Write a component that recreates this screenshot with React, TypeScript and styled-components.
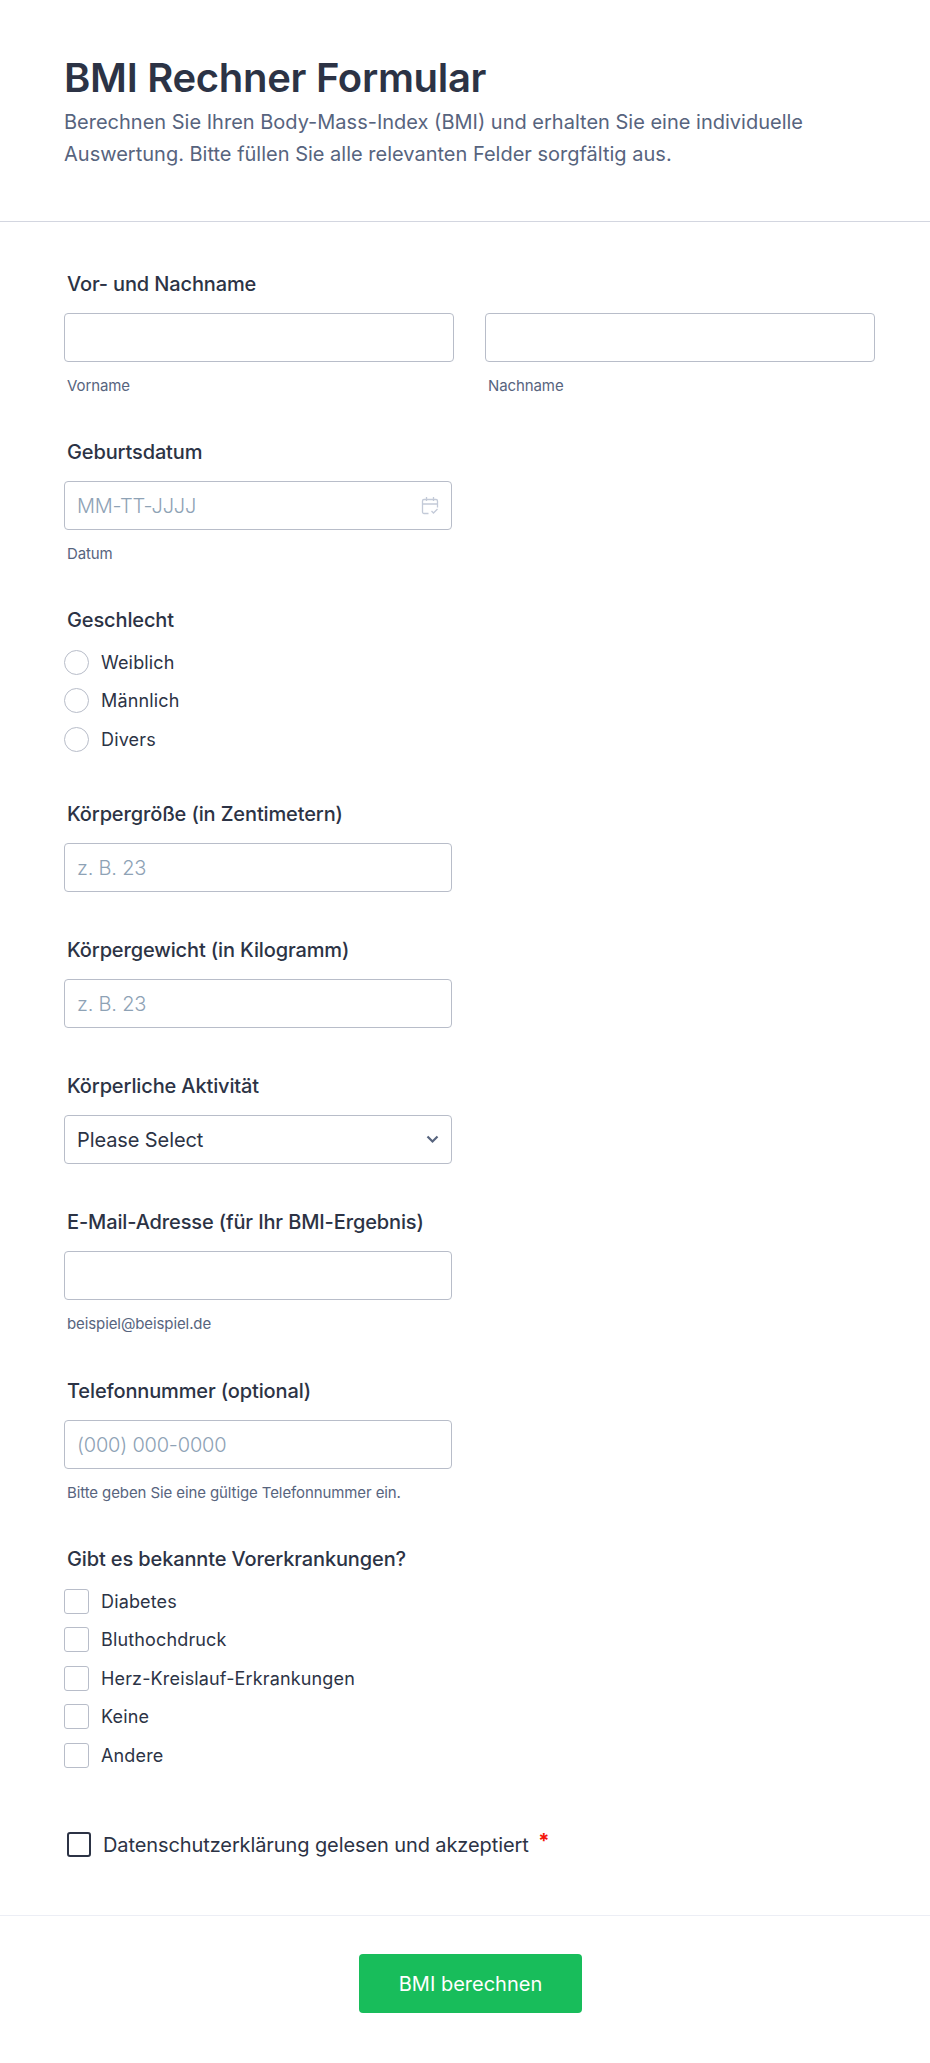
import styled, { createGlobalStyle } from 'styled-components'

const GlobalStyle = createGlobalStyle`
  * {
    box-sizing: border-box;
  }
  body {
    margin: 0;
    background: #fff;
    font-family: Inter, "Liberation Sans", sans-serif;
  }
`

const Page = styled.div`
  width: 930px;
  height: 2063px;
  background: #fff;
  color: #2c3345;
`

const Header = styled.header`
  height: 222px;
  padding: 49px 64px 0;
  border-bottom: 1px solid #d3d6e0;
`

const Title = styled.h1`
  margin: 0;
  font-size: 40px;
  line-height: 57px;
  font-weight: 600;
  letter-spacing: -0.3px;
  color: #2c3345;
`

const Description = styled.p`
  margin: 0;
  font-size: 20px;
  line-height: 32px;
  color: #57647e;
`

const Form = styled.main`
  padding: 48px 64px 0;
  height: 1694px;
  border-bottom: 1px solid #eceef5;
`

const Field = styled.section<{ $gap?: number }>`
  margin-bottom: ${({ $gap }) => $gap ?? 44}px;
`

const Label = styled.div`
  margin: 0 0 15px 3px;
  font-size: 20px;
  line-height: 28px;
  font-weight: 500;
  letter-spacing: -0.13px;
  color: #2c3345;
`

const NameRow = styled.div`
  display: grid;
  grid-template-columns: 390px 390px;
  gap: 31px;
`

const InputBox = styled.div`
  display: flex;
  align-items: center;
  justify-content: space-between;
  width: 388px;
  height: 49px;
  padding: 0 12px;
  background: #fff;
  border: 1px solid #b8bdc9;
  border-radius: 4px;
  font-size: 20px;
`

const WideInputBox = styled(InputBox)`
  width: 390px;
`

const Placeholder = styled.span`
  color: #8ea2b5;
  font-weight: 300;
  letter-spacing: -0.2px;
`

const SelectValue = styled.span`
  padding-top: 1px;
  color: #2c3345;
  letter-spacing: -0.1px;
`

const Hint = styled.div`
  margin: 14px 0 -2px 3px;
  font-size: 15px;
  line-height: 20px;
  letter-spacing: -0.1px;
  color: #57647e;
`

const OptionList = styled.div`
  display: flex;
  flex-direction: column;
  gap: 14.5px;
  margin-top: 16px;
`

const Option = styled.div`
  display: flex;
  align-items: center;
  gap: 12px;
  height: 24px;
  font-size: 18px;
  letter-spacing: 0.15px;
  color: #2c3345;
`

const Radio = styled.span`
  width: 25px;
  height: 25px;
  border: 1px solid #b8bdc9;
  border-radius: 50%;
`

const CheckBox = styled.span`
  width: 25px;
  height: 25px;
  border: 1px solid #b8bdc9;
  border-radius: 3px;
`

const TermsRow = styled.div`
  display: flex;
  align-items: center;
  gap: 12px;
  margin: 0 0 0 3px;
  font-size: 20px;
  letter-spacing: -0.1px;
  color: #2c3345;
`

const TermsBox = styled.span`
  width: 24px;
  height: 25px;
  border: 2px solid #2c3345;
  border-radius: 3px;
`

const Required = styled.span`
  position: relative;
  top: -4px;
  margin-left: 4px;
  color: #f5170a;
  font-weight: 700;
`

const Footer = styled.footer`
  display: flex;
  justify-content: center;
  padding: 38px 0 0 11px;
`

const SubmitButton = styled.button`
  width: 223px;
  height: 59px;
  border: 0;
  border-radius: 4px;
  background: #18bd5b;
  color: #fff;
  font-family: inherit;
  font-size: 20px;
  font-weight: 400;
`

const CalendarIcon = () => (
  <svg width="18" height="19" viewBox="0 0 18 19" fill="none" stroke="#c3cad8" strokeWidth="1.3">
    <path d="M7.5 17.5H3A1.5 1.5 0 0 1 1.5 16V5A1.5 1.5 0 0 1 3 3.5h12A1.5 1.5 0 0 1 16.5 5v6.5" />
    <path d="M1.5 8h15M5.5 1v4M12.5 1v4" />
    <path d="M10.5 15l2 2 4-4" />
  </svg>
)

const ChevronIcon = () => (
  <svg width="13" height="9" viewBox="0 0 13 9" fill="none" stroke="#57647e" strokeWidth="2.2">
    <path d="M1.5 1.5l5 5 5-5" />
  </svg>
)

const genders = ['Weiblich', 'Männlich', 'Divers']
const conditions = ['Diabetes', 'Bluthochdruck', 'Herz-Kreislauf-Erkrankungen', 'Keine', 'Andere']

const App = () => (
  <Page>
    <GlobalStyle />
    <Header>
      <Title>BMI Rechner Formular</Title>
      <Description>
        Berechnen Sie Ihren Body-Mass-Index (BMI) und erhalten Sie eine individuelle
        <br />
        Auswertung. Bitte füllen Sie alle relevanten Felder sorgfältig aus.
      </Description>
    </Header>
    <Form>
      <Field>
        <Label>Vor- und Nachname</Label>
        <NameRow>
          <div>
            <WideInputBox />
            <Hint>Vorname</Hint>
          </div>
          <div>
            <WideInputBox />
            <Hint>Nachname</Hint>
          </div>
        </NameRow>
      </Field>
      <Field>
        <Label>Geburtsdatum</Label>
        <InputBox>
          <Placeholder>MM-TT-JJJJ</Placeholder>
          <CalendarIcon />
        </InputBox>
        <Hint>Datum</Hint>
      </Field>
      <Field $gap={49}>
        <Label>Geschlecht</Label>
        <OptionList>
          {genders.map(g => (
            <Option key={g}>
              <Radio />
              {g}
            </Option>
          ))}
        </OptionList>
      </Field>
      <Field>
        <Label>Körpergröße (in Zentimetern)</Label>
        <InputBox>
          <Placeholder>z. B. 23</Placeholder>
        </InputBox>
      </Field>
      <Field>
        <Label>Körpergewicht (in Kilogramm)</Label>
        <InputBox>
          <Placeholder>z. B. 23</Placeholder>
        </InputBox>
      </Field>
      <Field>
        <Label>Körperliche Aktivität</Label>
        <InputBox>
          <SelectValue>Please Select</SelectValue>
          <ChevronIcon />
        </InputBox>
      </Field>
      <Field $gap={45}>
        <Label>E-Mail-Adresse (für Ihr BMI-Ergebnis)</Label>
        <InputBox />
        <Hint>beispiel@beispiel.de</Hint>
      </Field>
      <Field>
        <Label>Telefonnummer (optional)</Label>
        <InputBox>
          <Placeholder>(000) 000-0000</Placeholder>
        </InputBox>
        <Hint>Bitte geben Sie eine gültige Telefonnummer ein.</Hint>
      </Field>
      <Field $gap={65}>
        <Label>Gibt es bekannte Vorerkrankungen?</Label>
        <OptionList>
          {conditions.map(c => (
            <Option key={c}>
              <CheckBox />
              {c}
            </Option>
          ))}
        </OptionList>
      </Field>
      <TermsRow>
        <TermsBox />
        <span>
          Datenschutzerklärung gelesen und akzeptiert <Required>*</Required>
        </span>
      </TermsRow>
    </Form>
    <Footer>
      <SubmitButton>BMI berechnen</SubmitButton>
    </Footer>
  </Page>
)

export default App
